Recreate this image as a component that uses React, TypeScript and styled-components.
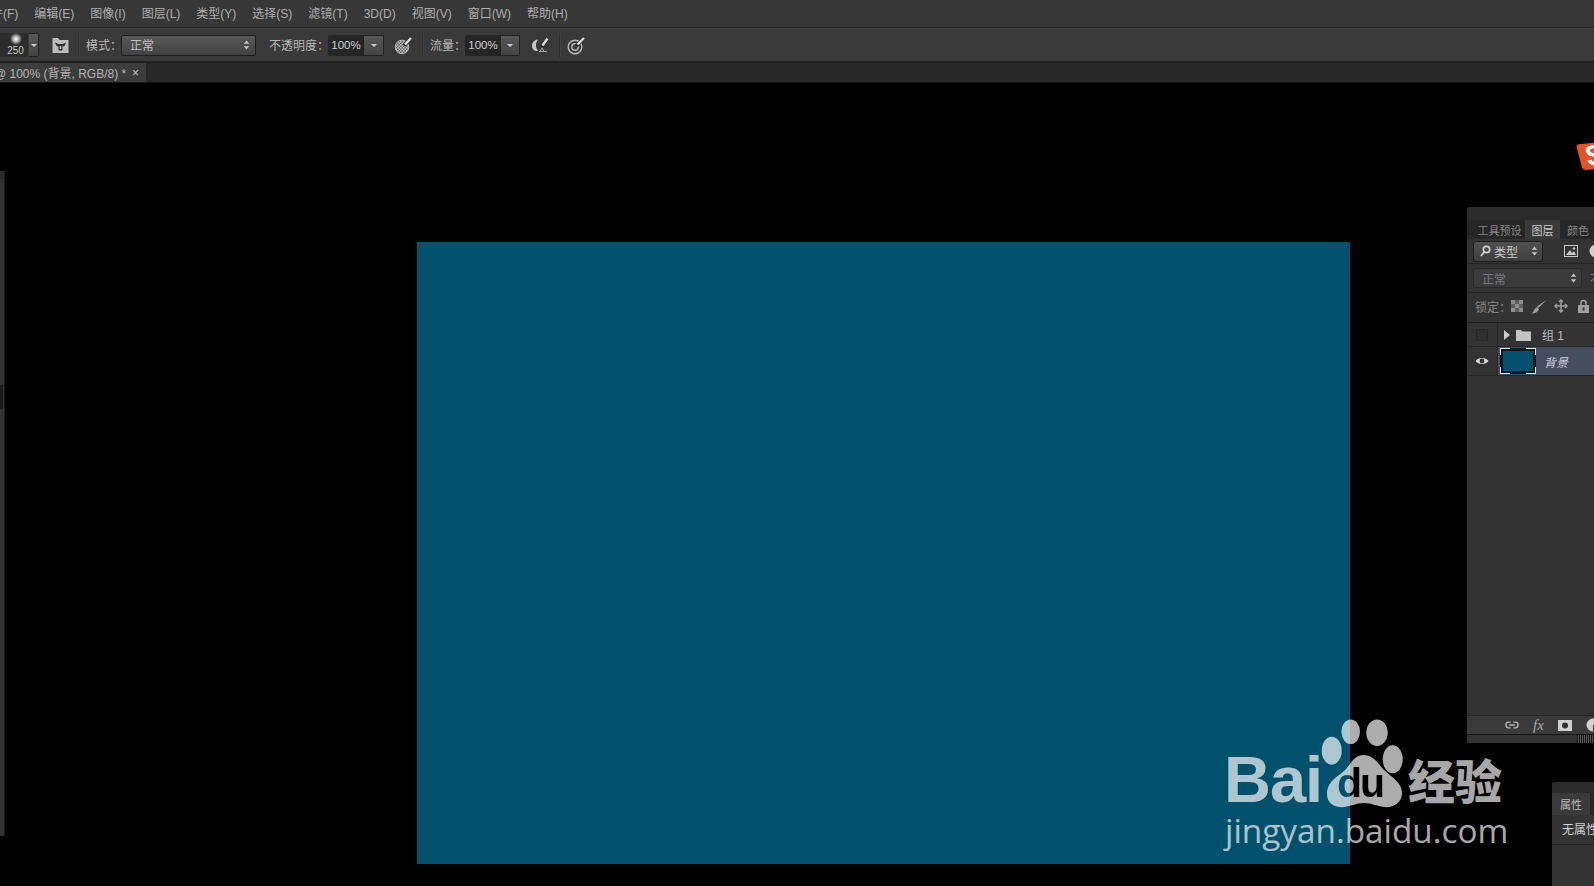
import React from "react";
import styled, { createGlobalStyle } from "styled-components";

const Global = createGlobalStyle`
	html, body {
		margin: 0;
		padding: 0;
		background: #000;
		overflow: hidden;
	}
	* {
		box-sizing: border-box;
	}
`;

const Page = styled.div`
	position: relative;
	width: 1594px;
	height: 886px;
	display: flex;
	flex-direction: column;
	overflow: hidden;
	background: #000;
	color: #b4b4b4;
	font-family: "Liberation Sans", "Noto Sans CJK SC", sans-serif;
	font-size: 12px;
`;

const MenuBar = styled.div`
	height: 28px;
	flex: none;
	display: flex;
	align-items: baseline;
	gap: 16px;
	padding: 4px 0 0 0;
	margin-left: -21px;
	background: #373737;
	border-bottom: 1px solid #202020;
`;

const MenuItem = styled.span`
	color: #aeaeae;
	white-space: nowrap;
`;

const OptionsBar = styled.div`
	height: 35px;
	flex: none;
	display: flex;
	align-items: center;
	background: #393939;
	border-top: 1px solid #464646;
	border-bottom: 2px solid #1f1f1f;
`;

const BrushPreview = styled.div`
	width: 28px;
	height: 24px;
	flex: none;
	display: flex;
	flex-direction: column;
	align-items: center;
	justify-content: flex-end;
	background: #2c2c2c;
	border-radius: 0 2px 2px 0;
	font-size: 10px;
	line-height: 13px;
	color: #c8c8c8;
	padding-left: 3px;
`;

const BrushDot = styled.div`
	width: 12px;
	height: 12px;
	margin-bottom: -1px;
	border-radius: 50%;
	background: radial-gradient(circle, #fff 0%, #bbb 30%, transparent 72%);
`;

const ArrowButton = styled.div<{ $w: number; $h?: number; $ml?: number }>`
	width: ${(p) => p.$w}px;
	height: ${(p) => p.$h ?? 24}px;
	margin-left: ${(p) => p.$ml ?? 0}px;
	display: flex;
	align-items: center;
	justify-content: center;
	flex: none;
	background: linear-gradient(#575757, #444);
	border: 1px solid #222;
	border-left: none;
	border-radius: 0 2px 2px 0;
	&::after {
		content: "";
		border-left: 3px solid transparent;
		border-right: 3px solid transparent;
		border-top: 3px solid #d0d0d0;
	}
`;

const ToolIcon = styled.div<{ $ml: number }>`
	margin-left: ${(p) => p.$ml}px;
	display: flex;
	flex: none;
`;

const Divider = styled.div<{ $ml: number }>`
	width: 1px;
	height: 24px;
	flex: none;
	margin-left: ${(p) => p.$ml}px;
	background: #2c2c2c;
	box-shadow: 1px 0 0 #434343;
`;

const Label = styled.span<{ $ml: number; $w: number }>`
	margin-left: ${(p) => p.$ml}px;
	width: ${(p) => p.$w}px;
	flex: none;
	padding-bottom: 2px;
	color: #b8b8b8;
	white-space: nowrap;
`;

const ModeSelect = styled.div`
	width: 135px;
	height: 21px;
	flex: none;
	margin-left: 6px;
	display: flex;
	align-items: center;
	justify-content: space-between;
	padding: 0 5px 1px 8px;
	color: #c4c4c4;
	background: linear-gradient(#585858, #414141);
	border: 1px solid #1e1e1e;
	border-radius: 2px;
`;

const UpDown = styled.svg`
	width: 7px;
	height: 10px;
	flex: none;
`;

const Spin = () => (
	<UpDown viewBox="0 0 7 10">
		<path d="M3.5 0.5 6.2 3.8H0.8Z M3.5 9.5 0.8 6.2H6.2Z" fill="#c6c6c6" />
	</UpDown>
);

const PercentInput = styled.div`
	width: 36px;
	height: 21px;
	flex: none;
	margin-left: 5px;
	display: flex;
	align-items: center;
	justify-content: center;
	font-size: 11.5px;
	color: #cfcfcf;
	background: #252525;
	border-radius: 2px 0 0 2px;
`;

const TabStrip = styled.div`
	height: 20px;
	flex: none;
	display: flex;
	background: #282828;
	border-bottom: 1px solid #141414;
`;

const DocTab = styled.div`
	width: 146px;
	display: flex;
	align-items: center;
	justify-content: space-between;
	padding: 0 7px 0 0;
	color: #b4b4b4;
	font-size: 12px;
	background: #3c3c3c;
	white-space: nowrap;
	overflow: hidden;
`;

const TabTitle = styled.span`
	margin-left: -6px;
`;

const CloseMark = styled.span`
	font-size: 12px;
	color: #c9c9c9;
`;

const Workspace = styled.div`
	flex: 1;
	background: #000;
`;

const DocCanvas = styled.div`
	width: 933px;
	height: 622px;
	margin: 159px 0 0 417px;
	background: #02516c;
`;

const LeftToolbar = styled.div`
	position: absolute;
	left: 0;
	top: 171px;
	width: 5px;
	height: 665px;
	background: #333;
	border-top: 8px solid #2a2a2a;
	border-right: 1px solid #1a1a1a;
`;

const Grip = styled.div`
	width: 3px;
	height: 24px;
	margin-top: 206px;
	background: #1b1b1b;
`;

const FloatPanel = styled.div<{ $left: number; $top: number; $height: number }>`
	position: absolute;
	left: ${(p) => p.$left}px;
	top: ${(p) => p.$top}px;
	right: 0;
	height: ${(p) => p.$height}px;
	display: flex;
	flex-direction: column;
	background: #333;
	border-radius: 3px 0 0 0;
	overflow: hidden;
`;

const PanelHead = styled.div<{ $h: number }>`
	height: ${(p) => p.$h}px;
	flex: none;
	background: #2b2b2b;
`;

const PanelTabs = styled.div`
	height: 19px;
	flex: none;
	display: flex;
	align-items: stretch;
	background: #262626;
	font-size: 11px;
	padding-left: 7px;
`;

const PanelTab = styled.div<{ $active?: boolean; $w: number }>`
	width: ${(p) => p.$w}px;
	flex: none;
	display: flex;
	align-items: center;
	justify-content: center;
	white-space: nowrap;
	color: ${(p) => (p.$active ? "#c9c9c9" : "#858585")};
	background: ${(p) => (p.$active ? "#3a3a3a" : "transparent")};
`;

const FilterRow = styled.div`
	height: 25px;
	flex: none;
	display: flex;
	align-items: center;
	padding-left: 6px;
	border-bottom: 1px solid #252525;
`;

const FilterSelect = styled.div`
	width: 70px;
	height: 21px;
	flex: none;
	display: flex;
	align-items: center;
	gap: 3px;
	padding: 0 4px 0 6px;
	color: #c8c8c8;
	background: linear-gradient(#505050, #3e3e3e);
	border: 1px solid #1e1e1e;
	border-radius: 3px;
`;

const Grow = styled.span`
	flex: 1;
`;

const ImageFilterIcon = styled.svg`
	margin-left: 21px;
	flex: none;
`;

const ShapeFilterIcon = styled.svg`
	margin-left: 11px;
	flex: none;
`;

const BlendRow = styled.div`
	height: 29px;
	flex: none;
	display: flex;
	align-items: center;
	padding-left: 6px;
	border-bottom: 1px solid #252525;
	white-space: nowrap;
`;

const BlendSelect = styled.div`
	width: 109px;
	height: 20px;
	flex: none;
	display: flex;
	align-items: center;
	justify-content: space-between;
	padding: 0 4px 0 8px;
	color: #7c7c7c;
	background: #3b3b3b;
	border: 1px solid #2a2a2a;
	border-radius: 3px;
`;

const OpacityLabel = styled.span`
	margin-left: 8px;
	color: #7c7c7c;
`;

const LockRow = styled.div`
	height: 30px;
	flex: none;
	display: flex;
	align-items: center;
	padding: 0 0 3px 8px;
	color: #868686;
	border-bottom: 1px solid #1f1f1f;
	white-space: nowrap;
`;

const LockText = styled.span`
	width: 28px;
	flex: none;
`;

const LockIcons = styled.div`
	display: flex;
	align-items: center;
	margin-left: 3px;
`;

const LockCell = styled.div`
	width: 22px;
	flex: none;
	display: flex;
	justify-content: center;
`;

const LayerRow = styled.div<{ $selected?: boolean; $h: number }>`
	height: ${(p) => p.$h}px;
	flex: none;
	display: flex;
	align-items: center;
	background: ${(p) => (p.$selected ? "#454d5f" : "#333")};
	border-bottom: 1px solid #252525;
`;

const EyeCell = styled.div`
	width: 31px;
	height: 100%;
	flex: none;
	display: flex;
	align-items: center;
	justify-content: center;
	background: #333;
	border-right: 1px solid #272727;
`;

const EmptyEye = styled.div`
	width: 12px;
	height: 12px;
	background: #2e2e2e;
	border: 1px solid #262626;
`;

const GroupName = styled.span`
	margin-left: 11px;
	color: #bdbdbd;
`;

const Thumb = styled.div`
	position: relative;
	width: 36px;
	height: 26px;
	flex: none;
	margin-left: 2px;
	background: #03506e;
	border: 1px solid #e4e4e4;
	box-shadow: inset 0 0 0 2px #10171c;
	&::before {
		content: "";
		position: absolute;
		top: -1px;
		bottom: -1px;
		left: 9px;
		right: 9px;
		border-top: 1px solid #10171c;
		border-bottom: 1px solid #10171c;
	}
	&::after {
		content: "";
		position: absolute;
		left: -1px;
		right: -1px;
		top: 6px;
		bottom: 6px;
		border-left: 1px solid #10171c;
		border-right: 1px solid #10171c;
	}
`;

const LayerName = styled.span`
	margin-left: 8px;
	color: #c8ccd4;
	font-style: italic;
	font-size: 12px;
`;

const LayersFill = styled.div`
	flex: 1;
`;

const PanelFooter = styled.div`
	height: 20px;
	flex: none;
	display: flex;
	align-items: center;
	gap: 14px;
	padding-left: 38px;
	background: #3a3a3a;
	border-top: 1px solid #222;
	border-bottom: 1px solid #141414;
	color: #a8a8a8;
	font-style: italic;
	font-family: "Liberation Serif", serif;
	font-size: 15px;
	& svg {
		flex: none;
	}
`;

const FooterGrip = styled.div`
	height: 8px;
	flex: none;
	display: flex;
	justify-content: flex-end;
	background: #333;
`;

const GripLines = styled.div`
	width: 17px;
	height: 100%;
	background: repeating-linear-gradient(90deg, #181818 0 1px, #555 1px 2px);
`;

const PropTabs = styled.div`
	height: 22px;
	flex: none;
	display: flex;
	background: #262626;
`;

const PropTab = styled.div`
	padding: 0 8px;
	display: flex;
	align-items: center;
	background: #3a3a3a;
	color: #bbb;
	font-size: 11px;
`;

const PropBody = styled.div`
	height: 30px;
	flex: none;
	display: flex;
	align-items: center;
	padding: 0 0 3px 10px;
	color: #d0d0d0;
	white-space: nowrap;
	border-bottom: 1px solid #262626;
`;

const SogouBadge = styled.div`
	position: absolute;
	left: 1579px;
	top: 143px;
	width: 32px;
	height: 26px;
	display: flex;
	align-items: center;
	justify-content: center;
	background: #e35526;
	border-radius: 3px;
	transform: skewX(10deg) rotate(-5deg);
	color: #fff;
	font: bold 28px "Liberation Sans", sans-serif;
`;

const Watermark = styled.div`
	position: absolute;
	left: 1222px;
	top: 755px;
	width: 290px;
	display: flex;
	flex-direction: column;
	color: rgba(255, 255, 255, 0.68);
	pointer-events: none;
`;

const LogoRow = styled.div`
	height: 50px;
	display: flex;
	align-items: flex-end;
	white-space: nowrap;
`;

const BaiText = styled.span`
	width: 99px;
	margin-left: 2px;
	font: bold 65px/50px "Liberation Sans", sans-serif;
	letter-spacing: -1px;
`;

const DuText = styled.span`
	width: 50px;
	margin-left: 14px;
	position: relative;
	z-index: 1;
	font: bold 41px/44px "Liberation Sans", sans-serif;
	letter-spacing: -2px;
	color: transparent;
	background: linear-gradient(90deg, #02516c 0 13px, #000 13px);
	-webkit-background-clip: text;
	background-clip: text;
`;

const JingText = styled.span`
	margin-left: 21px;
	font: 900 47px/52px "Noto Sans CJK SC", sans-serif;
`;

const UrlText = styled.div`
	margin: 6px 0 0 3px;
	font: 33.3px/38px "Open Sans", sans-serif;
	white-space: nowrap;
`;

const Paw = styled.svg`
	position: absolute;
	left: 1320px;
	top: 710px;
	width: 100px;
	height: 110px;
	pointer-events: none;
`;

const TriangleMark = styled.div`
	margin-left: 6px;
	width: 0;
	height: 0;
	border-top: 5px solid transparent;
	border-bottom: 5px solid transparent;
	border-left: 6px solid #c8c8c8;
`;

const FolderWrap = styled.span`
	margin-left: 6px;
	display: flex;
`;

const PressureIcon = () => (
	<svg width="20" height="20" viewBox="0 0 20 20">
		<defs>
			<pattern id="chk" width="3" height="3" patternUnits="userSpaceOnUse">
				<rect width="3" height="3" fill="#5e5e5e" />
				<rect width="1.5" height="1.5" fill="#c4c4c4" />
				<rect x="1.5" y="1.5" width="1.5" height="1.5" fill="#c4c4c4" />
			</pattern>
		</defs>
		<circle cx="8" cy="12" r="6.8" fill="url(#chk)" stroke="#b4b4b4" />
		<path d="M10 10.5 17 3" stroke="#2a2a2a" strokeWidth="3.6" />
		<path d="M11 9.5 17 3" stroke="#dcdcdc" strokeWidth="2.4" />
	</svg>
);

const FlowIcon = () => (
	<svg width="20" height="20" viewBox="0 0 20 20" fill="none">
		<path d="M8 4.5C3 5 1.5 9 2.2 12.5 3 15.5 5.5 16.5 8.5 15.5 5.5 14 5 8.5 8 4.5Z" fill="#c4c4c4" />
		<path d="M9 16.5H17M10 16.5 14 10M14 16.5 12 13" stroke="#a8a8a8" strokeWidth="1" />
		<path d="M11.5 12 17.5 3.5" stroke="#2a2a2a" strokeWidth="3.6" />
		<path d="M12.5 10.5 17.5 3.5" stroke="#dcdcdc" strokeWidth="2.4" />
	</svg>
);

const SmoothIcon = () => (
	<svg width="20" height="20" viewBox="0 0 20 20" fill="none">
		<circle cx="8" cy="12" r="6.8" stroke="#bcbcbc" strokeWidth="1.4" />
		<circle cx="8" cy="12" r="3.2" stroke="#bcbcbc" strokeWidth="1.4" />
		<path d="M9 11 17 3" stroke="#2a2a2a" strokeWidth="3.6" />
		<path d="M10.5 9.5 17 3" stroke="#dcdcdc" strokeWidth="2.4" />
	</svg>
);

const BrushPanelIcon = () => (
	<svg width="17" height="18" viewBox="0 0 17 18">
		<path d="M0.5 2H6L7.5 4H16.5V17H0.5Z" fill="#bcbcbc" />
		<path d="M3 6.5 6.5 8 10.5 8 14 6.5 12.5 10 10.5 10.5 10.5 14.5H6.5L6.5 10.5 4.5 10Z" fill="#303030" />
		<rect x="7.7" y="10" width="1.6" height="3" fill="#bcbcbc" />
	</svg>
);

const MagnifierIcon = () => (
	<svg width="11" height="12" viewBox="0 0 11 12" fill="none" stroke="#d2d2d2" strokeWidth="1.7">
		<circle cx="6.5" cy="4.5" r="3.2" />
		<path d="M4 7 1 11" />
	</svg>
);

const FolderIcon = () => (
	<svg width="15" height="12" viewBox="0 0 15 12">
		<path d="M0 1H5L6.5 2.5H15V12H0Z" fill="#c4c4c4" />
	</svg>
);

const menus = [
	"文件(F)",
	"编辑(E)",
	"图像(I)",
	"图层(L)",
	"类型(Y)",
	"选择(S)",
	"滤镜(T)",
	"3D(D)",
	"视图(V)",
	"窗口(W)",
	"帮助(H)",
];

const App: React.FunctionComponent = () => {
	return (
		<Page>
			<Global />
			<MenuBar>
				{menus.map((m) => (
					<MenuItem key={m}>{m}</MenuItem>
				))}
			</MenuBar>
			<OptionsBar>
				<BrushPreview>
					<BrushDot />
					250
				</BrushPreview>
				<ArrowButton $w={10} $ml={1} />
				<ToolIcon $ml={13}>
					<BrushPanelIcon />
				</ToolIcon>
				<Divider $ml={9} />
				<Label $ml={7} $w={29}>
					模式：
				</Label>
				<ModeSelect>
					正常
					<Spin />
				</ModeSelect>
				<Label $ml={13} $w={54}>
					不透明度：
				</Label>
				<PercentInput>100%</PercentInput>
				<ArrowButton $w={20} $h={21} />
				<ToolIcon $ml={10}>
					<PressureIcon />
				</ToolIcon>
				<Divider $ml={8} />
				<Label $ml={7} $w={30}>
					流量：
				</Label>
				<PercentInput>100%</PercentInput>
				<ArrowButton $w={19} $h={21} />
				<ToolIcon $ml={10}>
					<FlowIcon />
				</ToolIcon>
				<Divider $ml={9} />
				<ToolIcon $ml={7}>
					<SmoothIcon />
				</ToolIcon>
			</OptionsBar>
			<TabStrip>
				<DocTab>
					<TabTitle>@ 100% (背景, RGB/8) *</TabTitle>
					<CloseMark>×</CloseMark>
				</DocTab>
			</TabStrip>
			<Workspace>
				<DocCanvas />
			</Workspace>

			<LeftToolbar>
				<Grip />
			</LeftToolbar>

			<SogouBadge>S</SogouBadge>

			<FloatPanel $left={1467} $top={207} $height={536}>
				<PanelHead $h={13} />
				<PanelTabs>
					<PanelTab $w={51}>工具预设</PanelTab>
					<PanelTab $active $w={35}>
						图层
					</PanelTab>
					<PanelTab $w={36}>颜色</PanelTab>
				</PanelTabs>
				<FilterRow>
					<FilterSelect>
						<MagnifierIcon />
						类型
						<Grow />
						<Spin />
					</FilterSelect>
					<ImageFilterIcon width="14" height="12" viewBox="0 0 14 12">
						<rect x="0.5" y="0.5" width="13" height="11" fill="#333" stroke="#c8c8c8" />
						<path d="M2 10 6 5 8 8 10 6 12 10Z" fill="#c8c8c8" />
						<circle cx="10" cy="3.5" r="1.2" fill="#c8c8c8" />
					</ImageFilterIcon>
					<ShapeFilterIcon width="14" height="14" viewBox="0 0 14 14">
						<circle cx="7" cy="7" r="6.5" fill="#cfcfcf" />
						<path d="M7 7 13.5 7A6.5 6.5 0 0 1 7 13.5Z" fill="#444" />
					</ShapeFilterIcon>
				</FilterRow>
				<BlendRow>
					<BlendSelect>
						正常
						<Spin />
					</BlendSelect>
					<OpacityLabel>不透明度：</OpacityLabel>
				</BlendRow>
				<LockRow>
					<LockText>锁定：</LockText>
					<LockIcons>
						<LockCell>
							<svg width="12" height="12" viewBox="0 0 12 12">
								<rect width="12" height="12" fill="#5e5e5e" />
								<path d="M0 0H4V4H0ZM8 0H12V4H8ZM4 4H8V8H4ZM0 8H4V12H0ZM8 8H12V12H8Z" fill="#8e8e8e" />
							</svg>
						</LockCell>
						<LockCell>
							<svg width="17" height="15" viewBox="0 0 17 15">
								<path d="M16 0.5 7.5 9 6 7.5Z" fill="#a0a0a0" />
								<path d="M6 8 8 10C7 13 4 14.5 0.5 14.5 3 13 3 9.5 6 8Z" fill="#a0a0a0" />
							</svg>
						</LockCell>
						<LockCell>
							<svg width="14" height="14" viewBox="0 0 14 14" fill="none" stroke="#a0a0a0" strokeWidth="1.5">
								<path d="M7 1V13M1 7H13" />
								<path d="M5 3 7 1 9 3M5 11 7 13 9 11M3 5 1 7 3 9M11 5 13 7 11 9" />
							</svg>
						</LockCell>
						<LockCell>
							<svg width="11" height="14" viewBox="0 0 11 14">
								<path d="M3 6V4A2.5 2.5 0 0 1 8 4V6" fill="none" stroke="#a0a0a0" strokeWidth="1.5" />
								<rect y="6" width="11" height="8" fill="#a0a0a0" />
								<rect x="4.5" y="8.5" width="2" height="3" fill="#333" />
							</svg>
						</LockCell>
					</LockIcons>
				</LockRow>
				<LayerRow $h={24}>
					<EyeCell>
						<EmptyEye />
					</EyeCell>
					<TriangleMark />
					<FolderWrap>
						<FolderIcon />
					</FolderWrap>
					<GroupName>组 1</GroupName>
				</LayerRow>
				<LayerRow $selected $h={29}>
					<EyeCell>
						<svg width="14" height="10" viewBox="0 0 14 10">
							<path d="M0.5 5C3 1 11 1 13.5 5 11 9 3 9 0.5 5Z" fill="#d8d8d8" />
							<circle cx="7" cy="5" r="2.4" fill="#333" />
						</svg>
					</EyeCell>
					<Thumb />
					<LayerName>背景</LayerName>
				</LayerRow>
				<LayersFill />
				<PanelFooter>
					<svg width="14" height="8" viewBox="0 0 15 8" fill="none" stroke="#b8b8b8" strokeWidth="1.4">
						<path d="M6 1H4A3 3 0 0 0 4 7H6M9 1H11A3 3 0 0 1 11 7H9M4.5 4H10.5" />
					</svg>
					fx
					<svg width="14" height="11" viewBox="0 0 14 11">
						<rect width="14" height="11" fill="#d0d0d0" />
						<circle cx="7" cy="5.5" r="3" fill="#333" />
					</svg>
					<svg width="14" height="14" viewBox="0 0 14 14">
						<circle cx="7" cy="7" r="6.5" fill="#d0d0d0" />
						<path d="M7 7 13.5 7A6.5 6.5 0 0 1 7 13.5Z" fill="#333" />
					</svg>
				</PanelFooter>
				<FooterGrip>
					<GripLines />
				</FooterGrip>
			</FloatPanel>

			<FloatPanel $left={1552} $top={782} $height={104}>
				<PanelHead $h={11} />
				<PropTabs>
					<PropTab>属性</PropTab>
				</PropTabs>
				<PropBody>无属性</PropBody>
			</FloatPanel>

			<Paw viewBox="0 0 100 110">
				<g fill="#fff" fillOpacity="0.68">
					<ellipse cx="30.7" cy="21.7" rx="9.3" ry="12.3" />
					<ellipse cx="57" cy="22.7" rx="10.7" ry="13.3" />
					<ellipse cx="11.7" cy="40.7" rx="10" ry="14" />
					<ellipse cx="72.7" cy="49.3" rx="10" ry="14" />
					<path d="M43.3 45C35 45 31 53 26 59 20 66 7 70 7 84 7 95 17 98 24 97 31 96 37 93 44 93 51 93 57 96 64 97 73 98 82 93 82 83 82 72 70 66 63 59 58 53 53 45 43.3 45Z" />
				</g>
			</Paw>
			<Watermark>
				<LogoRow>
					<BaiText>Bai</BaiText>
					<DuText>du</DuText>
					<JingText>经验</JingText>
				</LogoRow>
				<UrlText>jingyan.baidu.com</UrlText>
			</Watermark>
		</Page>
	);
};

export default App;
